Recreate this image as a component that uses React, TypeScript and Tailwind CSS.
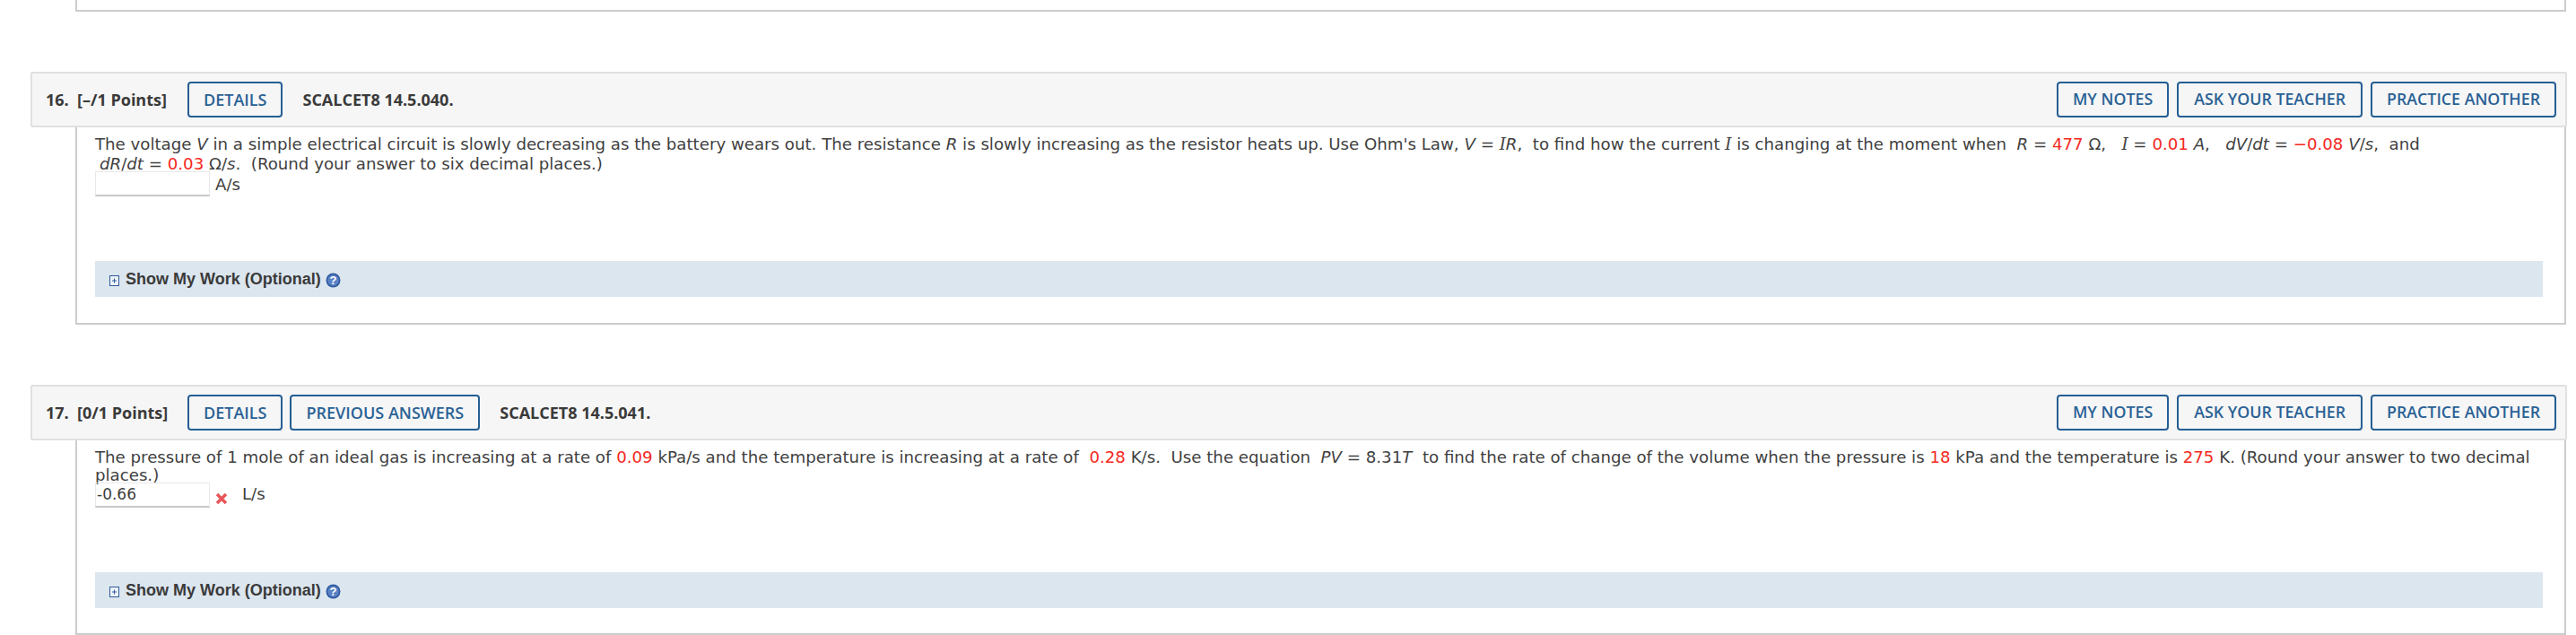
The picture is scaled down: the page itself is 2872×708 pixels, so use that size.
import React from "react";

const Btn = ({ children, cls }: { children: React.ReactNode; cls: string }) => (
  <button className={`h-10 rounded-[4px] border-2 border-[#255e94] text-[#2a6195] font-semibold font-['Open_Sans',sans-serif] whitespace-nowrap leading-none ${cls}`}>
    {children}
  </button>
);

const Header = ({ label, code, prev }: { label: string; code: string; prev?: boolean }) => (
  <div className="h-[62px] border-2 border-[#e0e0e0] bg-[#f6f6f6] rounded-[2px] ml-[34px] w-[2828px] flex items-center pl-[15px] pr-[10px] font-['Open_Sans',sans-serif] text-[#3a3a3a] text-[18px] font-bold">
    <span className="whitespace-pre w-[158px]">{label}</span>
    <div className="flex gap-[8px]">
      <Btn cls="px-[16px] text-[18px]">DETAILS</Btn>
      {prev && <Btn cls="px-[16px] text-[18px]">PREVIOUS ANSWERS</Btn>}
    </div>
    <span className="ml-[22px]">{code}</span>
    <div className="ml-auto flex gap-[9px]">
      <Btn cls="px-[16px] text-[17.8px]">MY NOTES</Btn>
      <Btn cls="px-[17px] text-[17.8px]">ASK YOUR TEACHER</Btn>
      <Btn cls="px-[16px] text-[17.8px]">PRACTICE ANOTHER</Btn>
    </div>
  </div>
);

const R = ({ children }: { children: React.ReactNode }) => <span className="text-[#f5281e]">{children}</span>;
const M = ({ children }: { children: React.ReactNode }) => <i className="italic">{children}</i>;
const SI = () => <i className="italic font-['DejaVu_Serif',serif]">I</i>;

const Work = () => (
  <div className="h-10 bg-[#dce6ef] flex items-center pl-4 font-['Liberation_Sans',sans-serif] font-bold text-[18px] text-[#3a3a3a]">
    <svg width="11" height="12" viewBox="0 0 11 12" className="mt-[3px] mr-[7px] shrink-0">
      <rect x="0.5" y="0.5" width="10" height="11" fill="#eef3f8" stroke="#2f5b9b" />
      <path d="M3 6h5M5.500 3.500v5" stroke="#2f5b9b" />
    </svg>
    <span>Show My Work (Optional)</span>
    <svg width="17" height="17" viewBox="0 0 17 17" className="ml-[5px] mt-[3px]">
      <circle cx="8.500" cy="8.500" r="8" fill="#2f5aa0" />
      <circle cx="8.500" cy="8.500" r="6.300" fill="#5a82c4" />
      <text x="8.500" y="13" textAnchor="middle" fontSize="13" fontWeight="700" fill="#fff" fontFamily="Liberation Sans">?</text>
    </svg>
  </div>
);

const Box = ({ children, cls }: { children: React.ReactNode; cls: string }) => (
  <div className={`ml-[84px] w-[2777px] border-2 border-t-0 border-[#cccccc] pl-[20px] pr-[24px] ${cls}`}>{children}</div>
);

const input = "w-[128px] h-[28px] border border-[#e8e8e8] border-b-2 border-b-[#c8c8c8] shrink-0";

export default function App() {
  return (
    <div className="h-[708px] w-[2872px] overflow-hidden bg-white font-['DejaVu_Sans',sans-serif] text-[18.18px] text-[#3f3f3f]">
      <div className="ml-[84px] w-[2777px] h-[13px] border-2 border-t-0 border-[#cccccc]" />
      <div className="h-[67px]" />
      <Header label="16.  [–/1 Points]" code="SCALCET8 14.5.040." />
      <Box cls="h-[220px] pt-[8px]">
        <div className="leading-[22px]">
          <p className="whitespace-pre">
            The voltage <M>V</M> in a simple electrical circuit is slowly decreasing as the battery wears out. The resistance <M>R</M> is slowly increasing as the resistor heats up. Use Ohm's Law, <M>V</M> = <SI /><M>R</M>,  to find how the current <SI /> is changing at the moment when  <M>R</M> = <R>477</R> Ω,   <SI /> = <R>0.01</R> <M>A</M>,   <M>dV</M>/<M>dt</M> = <R>−0.08</R> <M>V</M>/<M>s</M>,  and
          </p>
          <p className="whitespace-pre pl-[5px]">
            <M>dR</M>/<M>dt</M> = <R>0.03</R> Ω/<M>s</M>.  (Round your answer to six decimal places.)
          </p>
        </div>
        <div className="flex items-start -mt-[3px]">
          <div className={input} />
          <span className="ml-[6px] mt-[4px] leading-[22px]">A/s</span>
        </div>
        <div className="mt-[72px]"><Work /></div>
      </Box>
      <div className="h-[67px]" />
      <Header label="17.  [0/1 Points]" code="SCALCET8 14.5.041." prev />
      <Box cls="h-[217px] pt-[9px]">
        <div className="leading-[20px]">
          <p className="whitespace-pre">
            The pressure of 1 mole of an ideal gas is increasing at a rate of <R>0.09</R> kPa/s and the temperature is increasing at a rate of  <R>0.28</R> K/s.  Use the equation  <M>PV</M> = 8.31<M>T</M>  to find the rate of change of the volume when the pressure is <R>18</R> kPa and the temperature is <R>275</R> K. (Round your answer to two decimal
          </p>
          <p>places.)</p>
        </div>
        <div className="flex items-start -mt-[2px]">
          <div className={`${input} flex items-center pl-[1px] text-[17px] leading-none`}>-0.66</div>
          <svg width="14" height="14" viewBox="0 0 14 14" className="ml-[6px] mt-[11px] shrink-0">
            <path d="M2 2l10 10M12 2L2 12" stroke="#e9565a" strokeWidth="3.500" />
          </svg>
          <span className="ml-[16px] leading-[26px]">L/s</span>
        </div>
        <div className="mt-[72px]"><Work /></div>
      </Box>
    </div>
  );
}
